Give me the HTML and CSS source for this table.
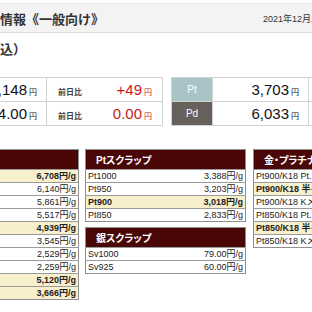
FILE: index.html
```html
<!DOCTYPE html>
<html lang="ja">
<head>
<meta charset="utf-8">
<title>貴金属価格情報</title>
<link rel="stylesheet" href="styles.css">
</head>
<body>
<header class="titlebar">
  <h1 class="title">情報《一般向け》</h1>
  <span class="date">2021年12月16日 9:30 現在</span>
</header>
<p class="subtitle">込）</p>
<main class="content">
  <section class="prices">
    <table class="price">
      <colgroup><col class="c-lbl"><col class="c-val"><col class="c-diff"></colgroup>
      <tr>
        <th class="lbl au">金</th>
        <td class="val">7,148<small>円</small></td>
        <td class="diff"><div class="diffbox"><span class="dl">前日比</span><span class="dv">+49<small>円</small></span></div></td>
      </tr>
      <tr>
        <th class="lbl ag">銀</th>
        <td class="val">94.00<small>円</small></td>
        <td class="diff"><div class="diffbox"><span class="dl">前日比</span><span class="dv">0.00<small>円</small></span></div></td>
      </tr>
    </table>
    <table class="price">
      <colgroup><col class="c-lbl"><col class="c-val"><col class="c-diff"></colgroup>
      <tr>
        <th class="lbl pt">Pt</th>
        <td class="val">3,703<small>円</small></td>
        <td class="diff"><div class="diffbox"><span class="dl">前日比</span><span class="dv">+12<small>円</small></span></div></td>
      </tr>
      <tr>
        <th class="lbl pd">Pd</th>
        <td class="val">6,033<small>円</small></td>
        <td class="diff"><div class="diffbox"><span class="dl">前日比</span><span class="dv">0<small>円</small></span></div></td>
      </tr>
    </table>
  </section>

  <section class="scraps">
    <table class="scrap gold">
      <tr><th colspan="2">金スクラップ</th></tr>
      <tr class="hl"><td>K24</td><td class="num">6,708円/g</td></tr>
      <tr><td>K23</td><td class="num">6,140円/g</td></tr>
      <tr><td>K22</td><td class="num">5,861円/g</td></tr>
      <tr><td>K21.6</td><td class="num">5,517円/g</td></tr>
      <tr class="hl"><td>K20</td><td class="num">4,939円/g</td></tr>
      <tr><td>K18</td><td class="num">3,545円/g</td></tr>
      <tr><td>K14</td><td class="num">2,529円/g</td></tr>
      <tr><td>K10</td><td class="num">2,259円/g</td></tr>
      <tr class="hl"><td>K18WG</td><td class="num">5,120円/g</td></tr>
      <tr class="hl"><td>K9</td><td class="num">3,666円/g</td></tr>
    </table>
    <div class="stack">
      <table class="scrap">
        <tr><th colspan="2">Ptスクラップ</th></tr>
        <tr><td>Pt1000</td><td class="num">3,388円/g</td></tr>
        <tr><td>Pt950</td><td class="num">3,203円/g</td></tr>
        <tr class="hl"><td>Pt900</td><td class="num">3,018円/g</td></tr>
        <tr><td>Pt850</td><td class="num">2,833円/g</td></tr>
      </table>
      <table class="scrap">
        <tr><th colspan="2">銀スクラップ</th></tr>
        <tr><td>Sv1000</td><td class="num">79.00円/g</td></tr>
        <tr><td>Sv925</td><td class="num">60.00円/g</td></tr>
      </table>
    </div>
    <table class="scrap combo">
      <tr><th colspan="2">金・プラチナコンビ</th></tr>
      <tr><td>Pt900/K18 Pt.メイン</td><td class="num">3,300円/g</td></tr>
      <tr class="hl"><td>Pt900/K18 半々</td><td class="num">4,200円/g</td></tr>
      <tr><td>Pt900/K18 Kメイン</td><td class="num">4,800円/g</td></tr>
      <tr><td>Pt850/K18 Pt.メイン</td><td class="num">3,200円/g</td></tr>
      <tr class="hl"><td>Pt850/K18 半々</td><td class="num">4,100円/g</td></tr>
      <tr><td>Pt850/K18 Kメイン</td><td class="num">4,700円/g</td></tr>
    </table>
  </section>
</main>
</body>
</html>
```

FILE: styles.css
```css
html, body {
  margin: 0;
  padding: 0;
  background: #ffffff;
  overflow: hidden;
}
body {
  font-family: "Liberation Sans", "Noto Sans CJK JP", sans-serif;
  color: #222;
  width: 312px;
  height: 312px;
}
.titlebar {
  display: flex;
  align-items: center;
  width: 460px;
  height: 28px;
  margin-top: 3px;
  background: #f3f3f3;
  border-top: 1px solid #ececec;
  border-bottom: 1px solid #dcdcdc;
}
.title {
  margin: 0;
  width: 263px;
  flex: none;
  font-size: 13px;
  font-weight: bold;
  color: #333;
  white-space: nowrap;
}
.date {
  font-size: 9px;
  color: #333;
  white-space: nowrap;
}
.subtitle {
  margin: 8px 0 0;
  font-size: 13px;
  line-height: 18px;
  font-weight: bold;
  color: #333;
}
.content {
  margin-left: -91px;
  width: 560px;
}
.prices {
  display: flex;
  gap: 8px;
  margin-top: 18px;
}
.price {
  border-collapse: collapse;
  table-layout: fixed;
  width: 253px;
  flex: none;
}
.c-lbl { width: 41px; }
.c-val { width: 96px; }
.c-diff { width: 116px; }
.price th, .price td {
  border: 1px solid #d2d2d2;
  height: 24px;
  padding: 0;
  box-sizing: border-box;
  white-space: nowrap;
}
.lbl {
  font-size: 10px;
  font-weight: normal;
  color: #fff;
  text-align: center;
}
.au { background: #c9a94a; }
.ag { background: #9ea3a8; }
.pt { background: #a9c4c7; }
.pd { background: #67605d; }
.price .val {
  text-align: right;
  padding-right: 9px;
  font-size: 15px;
  color: #111;
}
.val small, .dv small {
  font-size: 8px;
  margin-left: 2px;
}
.price .diff {
  padding: 0 10px 0 11px;
}
.diffbox {
  display: flex;
  align-items: baseline;
  justify-content: space-between;
}
.dl {
  font-size: 8px;
  font-weight: bold;
  color: #444;
}
.dv {
  font-size: 15px;
  color: #c41a1a;
}
.scraps {
  display: flex;
  align-items: flex-start;
  gap: 6px;
  margin-top: 23px;
}
.stack {
  display: flex;
  flex-direction: column;
  gap: 5px;
  flex: none;
  width: 161px;
  margin-right: 1px;
}
.scrap {
  border-collapse: collapse;
  width: 161px;
  flex: none;
  font-size: 9px;
  border: 1px solid #8f8f8f;
}
.scrap.gold { width: 170px; }
.scrap th {
  background: #4a0707;
  color: #fff;
  font-size: 10px;
  font-weight: bold;
  text-align: left;
  height: 19px;
  padding: 0 0 0 10px;
  font-feature-settings: "palt";
  white-space: nowrap;
}
.scrap td {
  height: 12px;
  padding: 0 2px;
  border-top: 1px solid #9a9a9a;
  line-height: 12px;
  white-space: nowrap;
  color: #222;
}
.scrap .num {
  text-align: right;
}
.scrap .hl td {
  background: #f8f0cd;
  font-weight: bold;
}
```
